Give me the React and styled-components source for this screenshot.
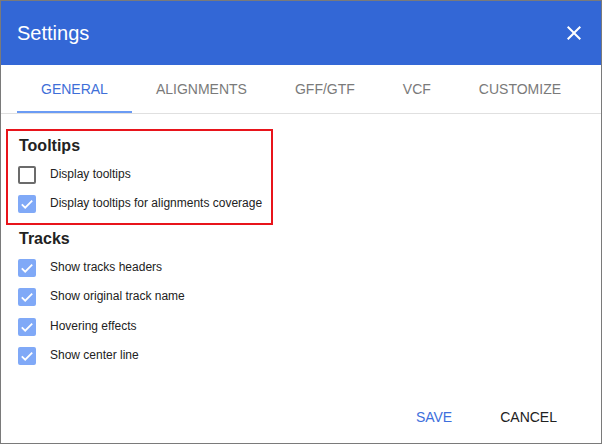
import React from 'react';
import styled, { createGlobalStyle } from 'styled-components';

const GlobalStyle = createGlobalStyle`
  html, body {
    margin: 0;
    padding: 0;
    background: #fff;
  }
  body {
    font-family: "Liberation Sans", Arial, sans-serif;
  }
`;

const tabs = ['General', 'Alignments', 'GFF/GTF', 'VCF', 'Customize'];

const tooltips = [
    { label: 'Display tooltips', checked: false },
    { label: 'Display tooltips for alignments coverage', checked: true },
];

const tracks = [
    { label: 'Show tracks headers', checked: true },
    { label: 'Show original track name', checked: true },
    { label: 'Hovering effects', checked: true },
    { label: 'Show center line', checked: true },
];

const CloseIcon = () => (
    <svg width="24" height="24" viewBox="0 0 24 24" fill="#fff">
        <path d="M19 6.41L17.59 5 12 10.59 6.41 5 5 6.41 10.59 12 5 17.59 6.41 19 12 13.41 17.59 19 19 17.59 13.41 12z" />
    </svg>
);

const Check = ({ checked }) => (
    <Box checked={checked}>
        {checked && (
            <svg width="14" height="14" viewBox="0 0 14 14">
                <path d="M1.8 7.3l3.4 3.4 7-7" fill="none" stroke="#fff" strokeWidth="1.8" />
            </svg>
        )}
    </Box>
);

const Section = ({ title, items, highlighted }) => (
    <Group highlighted={highlighted}>
        <Heading>{title}</Heading>
        {items.map(item => (
            <Row key={item.label}>
                <Check checked={item.checked} />
                <Label>{item.label}</Label>
            </Row>
        ))}
    </Group>
);

const App = () => {
    return (
        <>
            <GlobalStyle />
            <Dialog>
                <Header>
                    <Title>Settings</Title>
                    <CloseButton><CloseIcon /></CloseButton>
                </Header>
                <TabBar>
                    {tabs.map((tab, i) => (
                        <Tab key={tab} active={i === 0}>{tab}</Tab>
                    ))}
                </TabBar>
                <Content>
                    <Section title="Tooltips" items={tooltips} highlighted />
                    <Section title="Tracks" items={tracks} />
                </Content>
                <Footer>
                    <Action primary>Save</Action>
                    <Action>Cancel</Action>
                </Footer>
            </Dialog>
        </>
    );
};

const Dialog = styled.div`
    width: 602px;
    height: 444px;
    box-sizing: border-box;
    border: 1px solid #7a7a7a;
    display: flex;
    flex-direction: column;
    background: #fff;
`;

const Header = styled.div`
    height: 64px;
    flex: none;
    background: #3367d6;
    display: flex;
    align-items: center;
    justify-content: space-between;
    padding: 0 15px 0 16px;
`;

const Title = styled.div`
    color: #fff;
    font-size: 20px;
`;

const CloseButton = styled.div`
    width: 24px;
    height: 24px;
    display: flex;
`;

const TabBar = styled.div`
    height: 48px;
    flex: none;
    display: flex;
    padding-left: 16px;
    border-bottom: 1px solid #e0e0e0;
`;

const Tab = styled.div`
    display: flex;
    align-items: center;
    padding: 0 24px;
    font-size: 14px;
    text-transform: uppercase;
    color: ${p => (p.active ? '#3f6fd8' : '#7a7a7a')};
    box-shadow: ${p => (p.active ? 'inset 0 -2px 0 #6b9bf4' : 'none')};
`;

const Content = styled.div`
    flex: 1;
    padding: 15px 0 0 5px;
    display: flex;
    flex-direction: column;
    gap: 2px;
`;

const Group = styled.div`
    width: 267px;
    box-sizing: border-box;
    border: 2px solid ${p => (p.highlighted ? '#e8141b' : 'transparent')};
    padding: ${p => (p.highlighted ? '5px 10px 4px' : '0 10px')};
    display: flex;
    flex-direction: column;
`;

const Heading = styled.div`
    font-size: 16px;
    font-weight: bold;
    line-height: 20px;
    color: #222;
    padding-left: 1px;
    margin-bottom: 4px;
`;

const Row = styled.div`
    height: 29.5px;
    display: flex;
    align-items: center;
    gap: 14px;
`;

const Box = styled.div`
    width: 18px;
    height: 18px;
    flex: none;
    box-sizing: border-box;
    border-radius: 2px;
    border: 2px solid ${p => (p.checked ? '#80a9f7' : '#6b6b6b')};
    background: ${p => (p.checked ? '#80a9f7' : '#fff')};
    display: flex;
    align-items: center;
    justify-content: center;
`;

const Label = styled.span`
    font-size: 12px;
    color: #222;
    white-space: nowrap;
    margin-top: -2px;
`;

const Footer = styled.div`
    display: flex;
    justify-content: flex-end;
    padding: 8px 20px 8px;
`;

const Action = styled.div`
    height: 36px;
    display: flex;
    align-items: center;
    padding: 0 24px;
    font-size: 14px;
    text-transform: uppercase;
    color: ${p => (p.primary ? '#3d6fdc' : '#212121')};
`;

export default App;
